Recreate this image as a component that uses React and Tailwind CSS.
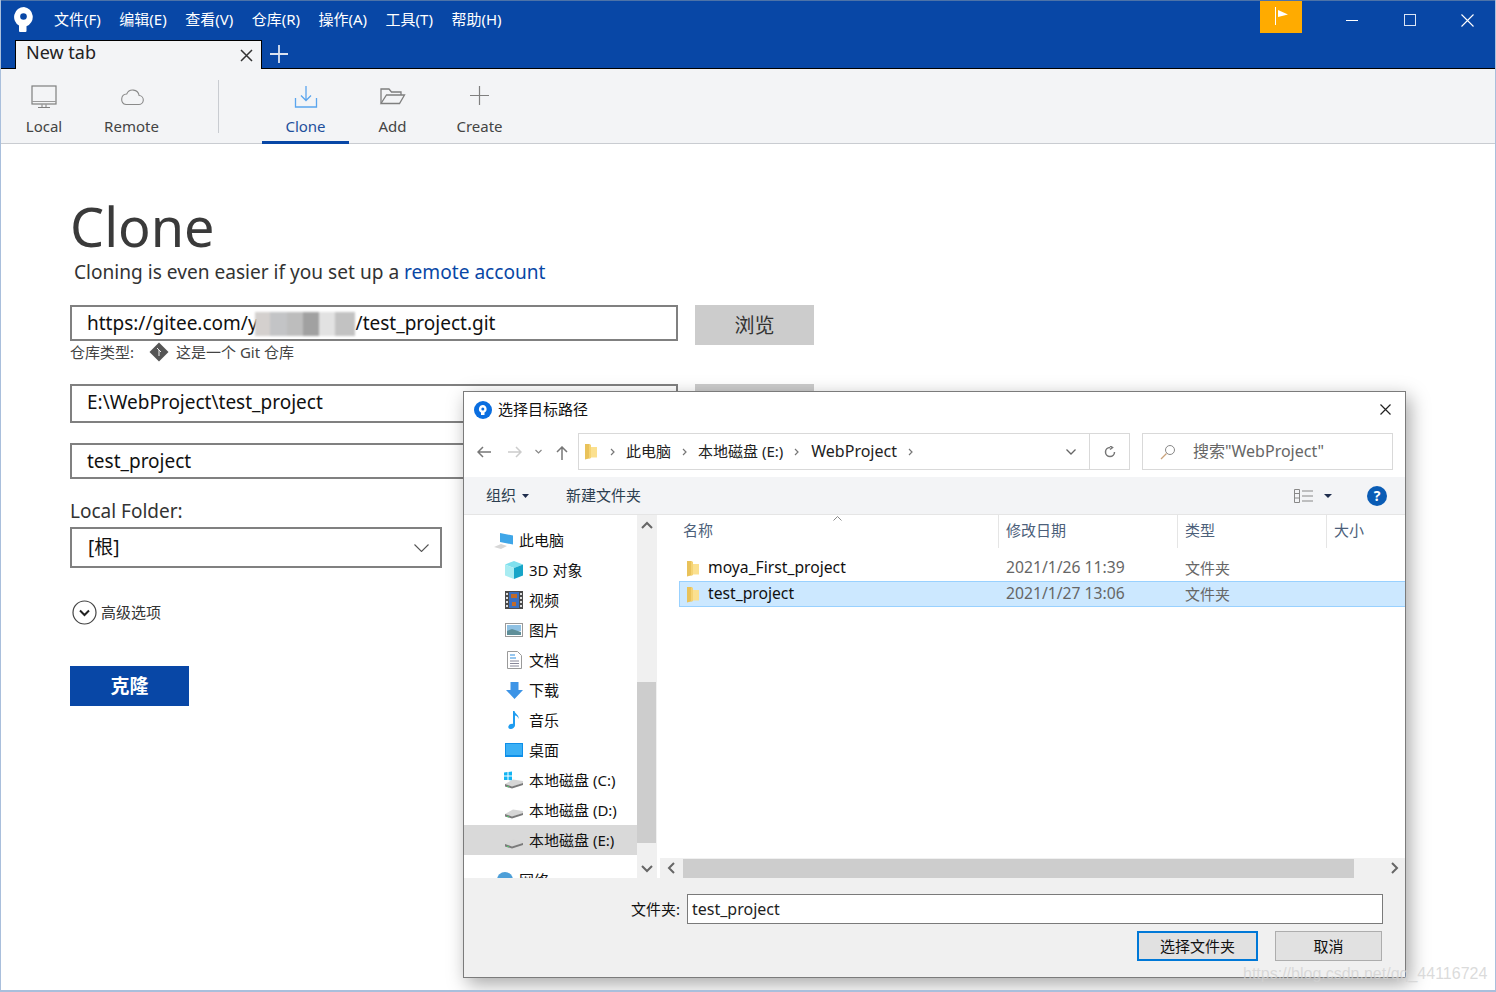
const sans = 'font-["Noto_Sans","Noto_Sans_CJK_SC",sans-serif]'

const menus = ['文件(F)', '编辑(E)', '查看(V)', '仓库(R)', '操作(A)', '工具(T)', '帮助(H)']

function Logo() {
  return (
    <svg width="22" height="26" viewBox="0 0 22 26">
      <path d="M11 1a10 10 0 0 0-5 18.600V25a1 1 0 0 0 1 1h5.500a1 1 0 0 0 1-1v-4.800A10 10 0 0 0 11 1z" fill="#fff" />
      <circle cx="10.500" cy="10.500" r="3.300" fill="#0847a6" />
    </svg>
  )
}

function ToolIcon({ name }) {
  if (name === 'local') return (
    <svg width="28" height="26" viewBox="0 0 28 26" fill="none">
      <rect x="2" y="2" width="24" height="18" fill="#f3f4f6" stroke="#7f7f7f" strokeWidth="1.200" />
      <path d="M2 17.500h24" stroke="#9a9a9a" />
      <path d="M8 23.500h12M12 20.500v3M16 20.500v3" stroke="#7f7f7f" />
    </svg>
  )
  if (name === 'remote') return (
    <svg width="28" height="26" viewBox="0 0 28 26" fill="none">
      <path d="M8 20.500h12.500a4.500 4.500 0 0 0 .6-9 6.500 6.500 0 0 0-12.400-1.500A5.300 5.300 0 0 0 8 20.500z" stroke="#8a8a8a" strokeWidth="1.100" />
    </svg>
  )
  if (name === 'clone') return (
    <svg width="28" height="26" viewBox="0 0 28 26" fill="none" stroke="#5aa5ee" strokeWidth="1.300">
      <path d="M14 2v14M9 11.500l5 5 5-5" />
      <path d="M3.500 14v9h21v-9" />
    </svg>
  )
  if (name === 'add') return (
    <svg width="28" height="26" viewBox="0 0 28 26" fill="none" stroke="#7f7f7f" strokeWidth="1.300">
      <path d="M2 19V5h8l2.500 3H22v3" />
      <path d="M2 19.500h18.500L25.500 11H7.500z" />
    </svg>
  )
  return (
    <svg width="28" height="26" viewBox="0 0 28 26" stroke="#7f7f7f" strokeWidth="1.200">
      <path d="M13.500 2v19M4 11.500h19" />
    </svg>
  )
}

function ToolItem({ icon, label, width, active }) {
  return (
    <div className={`flex h-[75px] flex-col items-center border-b-[3px] pt-[15px] ${width} ${active ? 'border-[#0847a6]' : 'border-transparent'}`}>
      <ToolIcon name={icon} />
      <span className={`mt-[6px] text-[15px] leading-[20px] ${active ? 'text-[#1e4f9c]' : 'text-[#444]'}`}>{label}</span>
    </div>
  )
}

function TitleBar() {
  return (
    <div className="h-[69px] border-t border-[#4d73a8] border-b border-b-black bg-[#0847a6]">
      <div className="flex h-[39px]">
        <div className="ml-[12px] mt-[5px] w-[22px]"><Logo /></div>
        <div className="ml-[19px] flex gap-[18.500px] pt-[8px]">
          {menus.map((m) => (
            <span key={m} className="text-[15px] leading-[20px] text-white">{m}</span>
          ))}
        </div>
        <div className="ml-auto flex">
          <div className="flex h-[32px] w-[42px] justify-center bg-[#ffab00] pt-[6px]">
            <svg width="15" height="19" viewBox="0 0 15 19">
              <path d="M1.500 0v18" stroke="#fff" />
              <path d="M4 3l10 4.500L4 10z" fill="#fff" />
            </svg>
          </div>
          <div className="ml-[29px] flex w-[42px] items-center justify-center pb-[1px]">
            <span className="h-px w-[12px] bg-white" />
          </div>
          <div className="ml-[16px] flex w-[42px] items-center justify-center pb-[1px]">
            <span className="h-[12px] w-[12px] border border-[#dbe6f5]" />
          </div>
          <div className="ml-[15px] mr-[7px] flex w-[42px] items-center justify-center pb-[1px]">
            <svg width="13" height="13" viewBox="0 0 13 13" stroke="#fff" strokeWidth="1.100"><path d="M.5.500l12 12M12.500.500l-12 12" /></svg>
          </div>
        </div>
      </div>
      <div className="flex h-[28px] pl-[14px]">
        <div className="flex h-[29px] w-[247px] items-start border border-b-0 border-black bg-[#f3f4f6] pl-[10px] pr-[8px]">
          <span className="mt-[-1px] text-[18px] leading-[24px] text-[#222]">New tab</span>
          <svg className="ml-auto mt-[8px]" width="13" height="13" viewBox="0 0 13 13" stroke="#333" strokeWidth="1.500"><path d="M1 1l11 11M12 1L1 12" /></svg>
        </div>
        <svg className="ml-[8px] mt-[5px]" width="18" height="18" viewBox="0 0 18 18" stroke="#dbe3f0" strokeWidth="1.800"><path d="M9 0v18M0 9h18" /></svg>
      </div>
    </div>
  )
}

function Toolbar() {
  return (
    <div className="flex h-[75px] border-b border-[#c9ccd1] bg-[#f3f4f6]">
      <div className="flex">
        <ToolItem icon="local" label="Local" width="w-[86px]" />
        <ToolItem icon="remote" label="Remote" width="w-[89px]" />
      </div>
      <div className="ml-[42px] mt-[11px] h-[53px] w-px bg-[#c9ccd1]" />
      <div className="ml-[43px] flex">
        <ToolItem icon="clone" label="Clone" width="w-[87px]" active />
        <ToolItem icon="add" label="Add" width="w-[87px]" />
        <ToolItem icon="create" label="Create" width="w-[87px]" />
      </div>
    </div>
  )
}

function CloneForm() {
  return (
    <div className="pl-[69px] pt-[51px]">
      <h1 className="text-[54px] font-normal leading-[62px] text-[#3a3a3a]">Clone</h1>
      <p className="ml-[4px] mt-[2px] text-[19.100px] leading-[26px] text-[#333]">
        Cloning is even easier if you set up a <span className="text-[#0847a6]">remote account</span>
      </p>
      <div className="mt-[20px] flex gap-[17px]">
        <div className="relative flex h-[36px] w-[608px] items-center border-2 border-[#808080] pl-[15px] text-[19px] text-[#111]">
          <span>https://gitee.com/y</span>
          <span className="ml-[98px]">/test_project.git</span>
          <div className="absolute left-[183px] top-[5px] flex h-[24px] w-[100px] blur-[1px]">
            <span className="w-[15px] bg-[#d4d0ce]" />
            <span className="w-[17px] bg-[#c3c4c6]" />
            <span className="w-[16px] bg-[#bdbdbd]" />
            <span className="w-[16px] bg-[#a1a1a1]" />
            <span className="w-[16px] bg-[#e2e2e2]" />
            <span className="w-[20px] bg-[#c2c2c2]" />
          </div>
        </div>
        <div className="flex h-[40px] w-[119px] items-center justify-center bg-[#cccccc] pt-[1px] text-[20px] text-[#333]">浏览</div>
      </div>
      <div className="mt-[-3px] flex h-[20px] items-center text-[15px] text-[#444]">
        <span>仓库类型:</span>
        <svg className="ml-[15px]" width="20" height="20" viewBox="0 0 20 20">
          <path d="M10 .5l9.500 9.500L10 19.500.5 10z" fill="#555" />
          <path d="M8 6l4 4M10 8v6" stroke="#eee" strokeWidth="1" />
        </svg>
        <span className="ml-[7px]">这是一个 Git 仓库</span>
      </div>
      <div className="mt-[22px] flex gap-[17px]">
        <div className="flex h-[39px] w-[608px] items-center border-2 border-[#808080] pb-[3px] pl-[15px] text-[19px] text-[#111]">E:\WebProject\test_project</div>
        <div className="h-[40px] w-[119px] bg-[#cccccc]" />
      </div>
      <div className="mt-[19px] flex h-[36px] w-[608px] items-center border-2 border-[#808080] pl-[15px] text-[19px] text-[#111]">test_project</div>
      <div className="mt-[19px] text-[19px] leading-[26px] text-[#333]">Local Folder:</div>
      <div className="mt-[3px] flex h-[41px] w-[372px] items-center justify-between border-2 border-[#808080] pl-[16px] pr-[11px] text-[19px] text-[#111]">
        <span>[根]</span>
        <svg width="15" height="8" viewBox="0 0 15 8" fill="none" stroke="#555" strokeWidth="1.100"><path d="M.5.500l7 7 7-7" /></svg>
      </div>
      <div className="mt-[31px] ml-[2px] flex h-[26px] items-center gap-[4px] text-[15px] text-[#333]">
        <svg width="25" height="25" viewBox="0 0 25 25" fill="none">
          <circle cx="12.500" cy="12.500" r="11.500" stroke="#444" strokeWidth="1.200" />
          <path d="M8 10.500l4.500 4.500 4.500-4.500" stroke="#222" strokeWidth="2" />
        </svg>
        <span>高级选项</span>
      </div>
      <div className="mt-[41px] flex h-[40px] w-[119px] items-center justify-center bg-[#0847a6] text-[19px] font-bold text-white">克隆</div>
    </div>
  )
}

function FolderIcon() {
  return (
    <svg width="14" height="17" viewBox="0 0 14 17">
      <path d="M1 1h4l2 1v13l-6 1.500z" fill="#e9c25a" />
      <path d="M7 4h6v10.500H7z" fill="#fbe08f" />
      <path d="M5 1.500l2 .5v13l-2 .5z" fill="#f5d373" />
    </svg>
  )
}

function Drive({ win }) {
  return (
    <svg width="20" height="18" viewBox="0 0 20 18">
      {win && <path d="M0 1.500L3.500 1v3.500H0zM4.500 1L8 .5v4H4.500zM0 5.500h3.500V9H0zM4.500 5.500H8v4l-3.500-.5z" fill="#12b4f2" />}
      <path d="M1 13l8-4.500 10 1.500v2l-11 4z" fill="#d6d6d6" />
      <path d="M1 13l7 2.500 11-3.500v2l-11 3.500-7-2z" fill="#7a7a7a" />
      <path d="M3 15.200l2 .7" stroke="#4fd06a" />
    </svg>
  )
}

function NavIcon({ name }) {
  if (name === 'pc') return (
    <svg width="20" height="17" viewBox="0 0 20 17">
      <path d="M6 1l13 2.500v9L6 10z" fill="#3fa6e8" />
      <path d="M0 15l7-3 6 2-6 3z" fill="#d7d7d7" />
    </svg>
  )
  if (name === '3d') return (
    <svg width="18" height="18" viewBox="0 0 18 18">
      <path d="M9 0l9 3.500L9 7 0 3.500z" fill="#7fe0ee" />
      <path d="M0 3.500L9 7v11l-9-3.500z" fill="#a8ecf2" />
      <path d="M18 3.500L9 7v11l9-3.500z" fill="#17a5c8" />
    </svg>
  )
  if (name === 'video') return (
    <svg width="18" height="18" viewBox="0 0 18 18">
      <rect width="18" height="18" fill="#4a4a4a" />
      <rect x="4" y="1" width="10" height="16" fill="#3a6fc0" />
      <path d="M6 3h6v4H6zM7 11h4v4H7z" fill="#c06a2a" />
      <path d="M1 2h2v2H1zM1 6h2v2H1zM1 10h2v2H1zM1 14h2v2H1zM15 2h2v2h-2zM15 6h2v2h-2zM15 10h2v2h-2zM15 14h2v2h-2z" fill="#ddd" />
    </svg>
  )
  if (name === 'pic') return (
    <svg width="18" height="14" viewBox="0 0 18 14">
      <rect x=".5" y=".5" width="17" height="13" fill="#fff" stroke="#9a9a9a" />
      <rect x="2" y="2" width="14" height="6" fill="#8fc1e3" />
      <path d="M2 8l5-2 9 3v3H2z" fill="#5f8f99" />
    </svg>
  )
  if (name === 'doc') return (
    <svg width="15" height="18" viewBox="0 0 15 18">
      <path d="M.5.500h10l4 4v13H.5z" fill="#fff" stroke="#9a9a9a" />
      <path d="M3 4h5M3 7h6" stroke="#2f8fe0" />
      <path d="M3 10h9M3 12.500h9M3 15h9" stroke="#889" />
    </svg>
  )
  if (name === 'down') return (
    <svg width="17" height="17" viewBox="0 0 17 17">
      <path d="M4.500 0h8v8H17l-8.500 9L0 8h4.500z" fill="#3d94e6" />
    </svg>
  )
  if (name === 'music') return (
    <svg width="12" height="18" viewBox="0 0 12 18">
      <path d="M5 0h1.500c.5 3 5 4 4 8-.5-2-2-3.500-3.500-3.500V14c0 2.500-2.500 4-4.500 4S0 16.500.5 15c.6-1.500 3-2.500 4.500-2z" fill="#1e9cf0" />
    </svg>
  )
  if (name === 'desk') return (
    <svg width="18" height="14" viewBox="0 0 18 14">
      <rect width="18" height="14" fill="#0f8fe8" />
      <rect x="1" y="1" width="16" height="11" fill="#3bb0f5" />
    </svg>
  )
  if (name === 'c') return <Drive win />
  return <Drive />
}

const navItems = [
  { icon: 'pc', label: '此电脑', top: true },
  { icon: '3d', label: '3D 对象' },
  { icon: 'video', label: '视频' },
  { icon: 'pic', label: '图片' },
  { icon: 'doc', label: '文档' },
  { icon: 'down', label: '下载' },
  { icon: 'music', label: '音乐' },
  { icon: 'desk', label: '桌面' },
  { icon: 'c', label: '本地磁盘 (C:)' },
  { icon: 'd', label: '本地磁盘 (D:)' },
  { icon: 'e', label: '本地磁盘 (E:)', selected: true },
]

function Chevron({ dir, color = '#666' }) {
  const d = { up: 'M1 7l5-5 5 5', down: 'M1 2l5 5 5-5', left: 'M7 1L2 6l5 5', right: 'M2 1l5 5-5 5' }[dir]
  const size = dir === 'up' || dir === 'down' ? 'w-[12px] h-[9px]' : 'w-[9px] h-[12px]'
  const box = dir === 'up' || dir === 'down' ? '0 0 12 9' : '0 0 9 12'
  return <svg className={size} viewBox={box} fill="none" stroke={color} strokeWidth="2"><path d={d} /></svg>
}

function Crumb() {
  return <svg width="5" height="8" viewBox="0 0 5 8" fill="none" stroke="#777" strokeWidth="1.200"><path d="M1 1l3 3-3 3" /></svg>
}

function FileDialog() {
  return (
    <div className="absolute left-[462px] top-[391px] flex h-[587px] w-[943px] flex-col border border-[#7b7b7b] bg-white shadow-[4px_6px_18px_rgba(0,0,0,0.35)]">
      <div className="flex h-[35px] items-center pl-[10px] pr-[14px]">
        <svg width="18" height="18" viewBox="0 0 18 18">
          <circle cx="9" cy="9" r="9" fill="#0a6ee0" />
          <path d="M9 4a4 4 0 0 0-2 7.500V14h3.500v-2.500A4 4 0 0 0 9 4z" fill="#fff" />
          <circle cx="8.800" cy="8" r="1.500" fill="#0a6ee0" />
        </svg>
        <span className="ml-[6px] pb-[1px] text-[15px] text-[#111]">选择目标路径</span>
        <svg className="ml-auto" width="11" height="11" viewBox="0 0 11 11" stroke="#222" strokeWidth="1.200"><path d="M.5.500l10 10M10.500.500l-10 10" /></svg>
      </div>

      <div className="flex h-[50px] items-start pt-[6px]">
        <div className="flex h-[37px] w-[114px] items-center pl-[13px]">
          <svg width="14" height="12" viewBox="0 0 14 12" fill="none" stroke="#777" strokeWidth="1.500"><path d="M6 1L1 6l5 5M1 6h13" /></svg>
          <svg className="ml-[17px]" width="14" height="12" viewBox="0 0 14 12" fill="none" stroke="#ccc" strokeWidth="1.500"><path d="M8 1l5 5-5 5M13 6H0" /></svg>
          <svg className="ml-[13px]" width="7" height="5" viewBox="0 0 7 5" fill="none" stroke="#888" strokeWidth="1.200"><path d="M.5 1l3 3 3-3" /></svg>
          <svg className="ml-[14px] mt-[2px]" width="12" height="14" viewBox="0 0 12 14" fill="none" stroke="#777" strokeWidth="1.500"><path d="M1 6l5-5 5 5M6 1v13" /></svg>
        </div>
        <div className="flex h-[37px] w-[512px] items-center border border-[#d9d9d9] pl-[5px] pr-[13px] text-[15px] text-[#222]">
          <FolderIcon />
          <span className="ml-[12px]"><Crumb /></span>
          <span className="ml-[11px] pb-[1px]">此电脑</span>
          <span className="ml-[11px]"><Crumb /></span>
          <span className="ml-[11px] pb-[1px]">本地磁盘 (E:)</span>
          <span className="ml-[11px]"><Crumb /></span>
          <span className="ml-[12px] pb-[1px] text-[16px]">WebProject</span>
          <span className="ml-[11px]"><Crumb /></span>
          <svg className="ml-auto" width="10" height="6" viewBox="0 0 10 6" fill="none" stroke="#666" strokeWidth="1.300"><path d="M.5.500L5 5 9.500.500" /></svg>
        </div>
        <div className="flex h-[37px] w-[40px] items-center justify-center border border-l-0 border-[#d9d9d9]">
          <svg width="12" height="12" viewBox="0 0 12 12" fill="none" stroke="#777" strokeWidth="1.500"><path d="M10.500 6A4.500 4.500 0 1 1 6 1.500M6 0l2.500 1.500L6 3.500" /></svg>
        </div>
        <div className="ml-[12px] flex h-[37px] w-[251px] items-center border border-[#d9d9d9] pl-[17px] text-[16px] text-[#666]">
          <svg width="16" height="16" viewBox="0 0 16 16" fill="none"><circle cx="10" cy="6" r="4.500" stroke="#888" /><path d="M6.500 9.500L1 15" stroke="#c9a27a" strokeWidth="1.200" /></svg>
          <span className="ml-[17px] pb-[1px]">搜索"WebProject"</span>
        </div>
      </div>

      <div className="flex h-[38px] items-center border-b border-[#e5e5e5] bg-[#f3f4f6] pl-[22px] pr-[18px] text-[15px] text-[#2c3e50]">
        <span className="pb-[1px]">组织</span>
        <svg className="ml-[6px]" width="7" height="4" viewBox="0 0 7 4"><path d="M0 0h7L3.500 4z" fill="#1f2d4d" /></svg>
        <span className="ml-[37px] pb-[1px]">新建文件夹</span>
        <svg className="ml-auto" width="19" height="14" viewBox="0 0 19 14" fill="none" stroke="#888">
          <path d="M.5.500h5v13h-5zM.5 4.500h5M.5 9h5M8 2h11M8 7h11M8 12h11" />
        </svg>
        <svg className="ml-[11px]" width="8" height="4" viewBox="0 0 8 4"><path d="M0 0h8L4 4z" fill="#1f2d4d" /></svg>
        <span className="ml-[35px] flex h-[20px] w-[20px] items-center justify-center rounded-full bg-[#0a5cb5] text-[14px] font-bold text-white">?</span>
      </div>

      <div className="flex h-[363px]">
        <div className="relative w-[173px] overflow-hidden pt-[10px]">
          {navItems.map((it) => (
            <div key={it.label} className={`flex h-[30px] items-center text-[15px] text-[#111] ${it.selected ? 'bg-[#d9d9d9]' : ''}`}>
              <span className={`flex w-[20px] justify-center ${it.top ? 'ml-[30px]' : 'ml-[40px]'}`}><NavIcon name={it.icon} /></span>
              <span className="ml-[5px]">{it.label}</span>
            </div>
          ))}
          <div className="mt-[10px] flex h-[30px] items-center text-[15px] text-[#111]">
            <svg className="ml-[30px]" width="20" height="18" viewBox="0 0 20 18"><circle cx="11" cy="9" r="8" fill="#4d9fd8" /><path d="M0 15l8-3 5 2-6 3z" fill="#ccc" /></svg>
            <span className="ml-[5px]">网络</span>
          </div>
        </div>
        <div className="flex w-[20px] flex-col bg-[#f0f0f0]">
          <div className="flex h-[20px] items-center justify-center"><Chevron dir="up" /></div>
          <div className="mt-[147px] h-[161px] w-[19px] bg-[#cdcdcd]" />
          <div className="mt-auto flex h-[20px] items-center justify-center"><Chevron dir="down" /></div>
        </div>
        <div className="ml-[3px] flex min-w-0 flex-1 flex-col">
          <div className="relative flex h-[33px] text-[15px] text-[#4c607a]">
            <svg className="absolute left-[173px] top-[1px]" width="9" height="5" viewBox="0 0 9 5" fill="none" stroke="#888"><path d="M.5 4.500l4-4 4 4" /></svg>
            <span className="flex w-[339px] items-center border-r border-[#e5e5e5] pb-[2px] pl-[23px]">名称</span>
            <span className="flex w-[179px] items-center border-r border-[#e5e5e5] pb-[2px] pl-[7px]">修改日期</span>
            <span className="flex w-[149px] items-center border-r border-[#e5e5e5] pb-[2px] pl-[7px]">类型</span>
            <span className="flex items-center pb-[2px] pl-[7px]">大小</span>
          </div>
          <div className="mt-[7px] pl-[19px]">
            <FileRow name="moya_First_project" date="2021/1/26 11:39" />
            <FileRow name="test_project" date="2021/1/27 13:06" selected />
          </div>
          <div className="mt-auto flex h-[20px] items-center bg-[#f0f0f0]">
            <span className="flex w-[23px] justify-center"><Chevron dir="left" /></span>
            <div className="h-[19px] w-[671px] bg-[#cdcdcd]" />
            <span className="ml-auto mr-[6px]"><Chevron dir="right" /></span>
          </div>
        </div>
      </div>

      <div className="flex flex-1 flex-col bg-[#f0f0f0] pr-[22px]">
        <div className="mt-[16px] flex items-center justify-end">
          <span className="text-[15px] text-[#111]">文件夹:</span>
          <div className="ml-[7px] flex h-[30px] w-[696px] items-center border border-[#7a7a7a] bg-white pb-[1px] pl-[4px] text-[16px] text-[#222]">test_project</div>
        </div>
        <div className="mt-[7px] flex justify-end">
          <div className="flex h-[30px] w-[121px] items-center justify-center border-2 border-[#0078d7] bg-[#e1e1e1] text-[15px] text-[#111]">选择文件夹</div>
          <div className="ml-[17px] mr-[1px] flex h-[30px] w-[107px] items-center justify-center border border-[#adadad] bg-[#e1e1e1] text-[15px] text-[#111]">取消</div>
        </div>
      </div>
    </div>
  )
}

function FileRow({ name, date, selected }) {
  return (
    <div className={`flex h-[26px] items-center ${selected ? 'border border-r-0 border-[#99d1ff] bg-[#cce8ff]' : 'border border-transparent'}`}>
      <span className="ml-[6px]"><FolderIcon /></span>
      <span className="ml-[8px] w-[298px] pb-[1px] text-[15.700px] text-[#111]">{name}</span>
      <span className="w-[179px] pb-[1px] text-[15.700px] text-[#666]">{date}</span>
      <span className="text-[15px] text-[#666]">文件夹</span>
    </div>
  )
}

export default function App() {
  return (
    <div className={`relative h-[992px] w-[1496px] overflow-hidden border-x border-b-2 border-[#a9bfdc] bg-white ${sans}`}>
      <TitleBar />
      <Toolbar />
      <CloneForm />
      <FileDialog />
      <span className="absolute left-[1242px] top-[962px] font-['Liberation_Sans',sans-serif] text-[16px] text-[#d2d2d2]/80">https://blog.csdn.net/qq_44116724</span>
    </div>
  )
}
